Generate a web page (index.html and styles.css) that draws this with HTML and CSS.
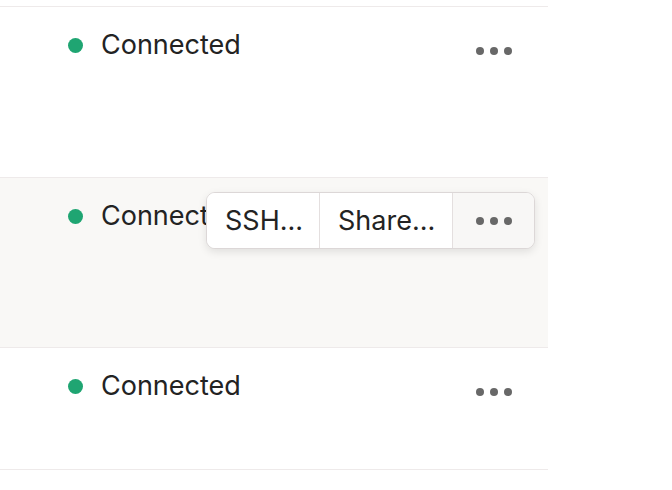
FILE: index.html
```html
<!DOCTYPE html>
<html>
<head>
<meta charset="utf-8">
<link rel="stylesheet" href="styles.css">
</head>
<body>
<div class="list">
  <div class="row row-tall">
    <div class="status"><span class="dot"></span><span class="label">Connected</span></div>
    <div class="actions">
      <button class="more" aria-label="More"><span></span><span></span><span></span></button>
    </div>
  </div>
  <div class="row row-mid row-hover">
    <div class="status"><span class="dot"></span><span class="label">Connected</span></div>
    <div class="toolbar">
      <button class="tb-btn tb-ssh">SSH...</button>
      <button class="tb-btn tb-share">Share...</button>
      <button class="more tb-more" aria-label="More"><span></span><span></span><span></span></button>
    </div>
  </div>
  <div class="row row-short">
    <div class="status"><span class="dot"></span><span class="label">Connected</span></div>
    <div class="actions">
      <button class="more" aria-label="More"><span></span><span></span><span></span></button>
    </div>
  </div>
</div>
</body>
</html>
```
FILE: styles.css
```css
* { box-sizing: border-box; }
html, body { margin: 0; padding: 0; background: #ffffff; }
body {
  font-family: Inter, "Noto Sans", sans-serif;
  color: #232323;
}
.list {
  width: 548px;
  margin-top: 6px;
  border-top: 1px solid #eeeaea;
}
.row {
  position: relative;
  display: flex;
  justify-content: space-between;
  align-items: flex-start;
  border-bottom: 1px solid #eeeaea;
}
.row-tall { height: 171px; }
.row-mid { height: 170px; }
.row-short { height: 122px; }
.row-hover { background: #f9f8f6; }
.status {
  display: flex;
  align-items: center;
  padding-left: 68px;
  padding-top: 21px;
  gap: 18px;
}
.dot {
  width: 15px;
  height: 15px;
  border-radius: 50%;
  background: #1fa572;
  flex: none;
}
.label {
  font-size: 27px;
  line-height: 34px;
  letter-spacing: 0;
}
.actions {
  margin-top: 15px;
  margin-right: 13px;
  height: 57px;
  display: flex;
}
.more {
  width: 82px;
  height: 57px;
  border: 0;
  background: transparent;
  padding: 0;
  display: flex;
  align-items: center;
  justify-content: center;
  gap: 6px;
  cursor: pointer;
}
.more span {
  width: 8px;
  height: 8px;
  border-radius: 50%;
  background: #686868;
}
.toolbar {
  position: absolute;
  top: 14px;
  right: 13px;
  height: 57px;
  display: flex;
  border: 1px solid #dcd7d7;
  border-radius: 9px;
  background: #ffffff;
  box-shadow: 0 3px 8px rgba(0, 0, 0, 0.10);
  overflow: hidden;
}
.tb-btn {
  font-family: Inter, "Noto Sans", sans-serif;
  font-size: 27px;
  color: #232323;
  background: #ffffff;
  border: 0;
  border-right: 1px solid #e4dfdf;
  padding: 0 18px 0 18px;
  height: 100%;
  line-height: 1;
  cursor: pointer;
}
.tb-ssh { width: 113px; }
.tb-share { width: 133px; }
.tb-more {
  width: 81px;
  height: 100%;
  background: #f8f7f6;
}
```
